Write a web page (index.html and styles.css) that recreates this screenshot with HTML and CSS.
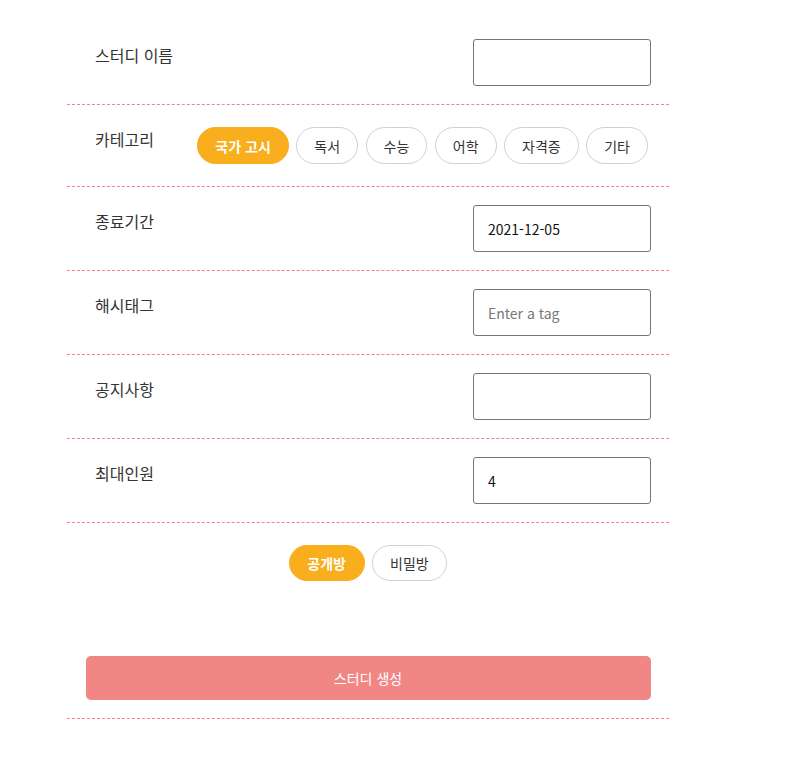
FILE: index.html
```html
<!DOCTYPE html>
<html lang="ko">
<head>
<meta charset="utf-8">
<link rel="stylesheet" href="styles.css">
</head>
<body>
<div class="page">
  <form class="study-form">
    <div class="row">
      <label class="label">스터디 이름</label>
      <input class="field" type="text">
    </div>
    <div class="row row-chips">
      <label class="label">카테고리</label>
      <div class="chips">
        <button type="button" class="chip active">국가 고시</button>
        <button type="button" class="chip">독서</button>
        <button type="button" class="chip">수능</button>
        <button type="button" class="chip">어학</button>
        <button type="button" class="chip">자격증</button>
        <button type="button" class="chip">기타</button>
      </div>
    </div>
    <div class="row">
      <label class="label">종료기간</label>
      <input class="field" type="text" value="2021-12-05">
    </div>
    <div class="row">
      <label class="label">해시태그</label>
      <input class="field" type="text" placeholder="Enter a tag">
    </div>
    <div class="row">
      <label class="label">공지사항</label>
      <input class="field" type="text">
    </div>
    <div class="row">
      <label class="label">최대인원</label>
      <input class="field" type="text" value="4">
    </div>
    <div class="footer">
      <div class="privacy">
        <button type="button" class="chip chip-sm active">공개방</button>
        <button type="button" class="chip chip-sm">비밀방</button>
      </div>
      <button type="button" class="submit">스터디 생성</button>
    </div>
  </form>
</div>
</body>
</html>
```
FILE: styles.css
```css
* { box-sizing: border-box; }
html, body { margin: 0; padding: 0; background: #fff; }
body {
  font-family: "Noto Sans CJK KR", "Noto Sans", sans-serif;
  color: #333;
}
.page {
  padding: 21px 0 0 67px;
}
.study-form {
  width: 602px;
}
.row {
  display: flex;
  justify-content: space-between;
  align-items: flex-start;
  padding: 18px 18px 18px 28px;
  border-bottom: 1px dashed #ff7f7f;
}
.label {
  font-size: 16px;
  line-height: 22px;
  margin-top: 5px;
  color: #333;
  white-space: nowrap;
}
.field {
  width: 178px;
  height: 47px;
  border: 1px solid #767676;
  border-radius: 3px;
  padding: 0 14px;
  font-family: inherit;
  font-size: 14px;
  color: #111;
  outline: none;
}
.field::placeholder { color: #777; }
.chips {
  display: flex;
  gap: 7.5px;
  margin: 4px 3px 4px 0;
}
.chip {
  height: 37px;
  padding: 0 17px;
  border: 1px solid #d0d0d0;
  border-radius: 19px;
  background: #fff;
  font-family: inherit;
  font-size: 14px;
  color: #333;
  cursor: pointer;
}
.chip.active {
  background: #f8ae1d;
  border-color: #f8ae1d;
  color: #fff;
  font-weight: 700;
}
.chip-sm {
  height: 36px;
  padding: 0 17.5px;
  border-radius: 18px;
}
.footer {
  display: flex;
  flex-direction: column;
  align-items: center;
  padding: 22px 0 18px;
  border-bottom: 1px dashed #ff7f7f;
}
.privacy {
  display: flex;
  gap: 7px;
}
.submit {
  margin-top: 75px;
  width: 565px;
  height: 44px;
  border: none;
  border-radius: 5px;
  background: #f08785;
  color: #fff;
  font-family: inherit;
  font-size: 14px;
}
```
